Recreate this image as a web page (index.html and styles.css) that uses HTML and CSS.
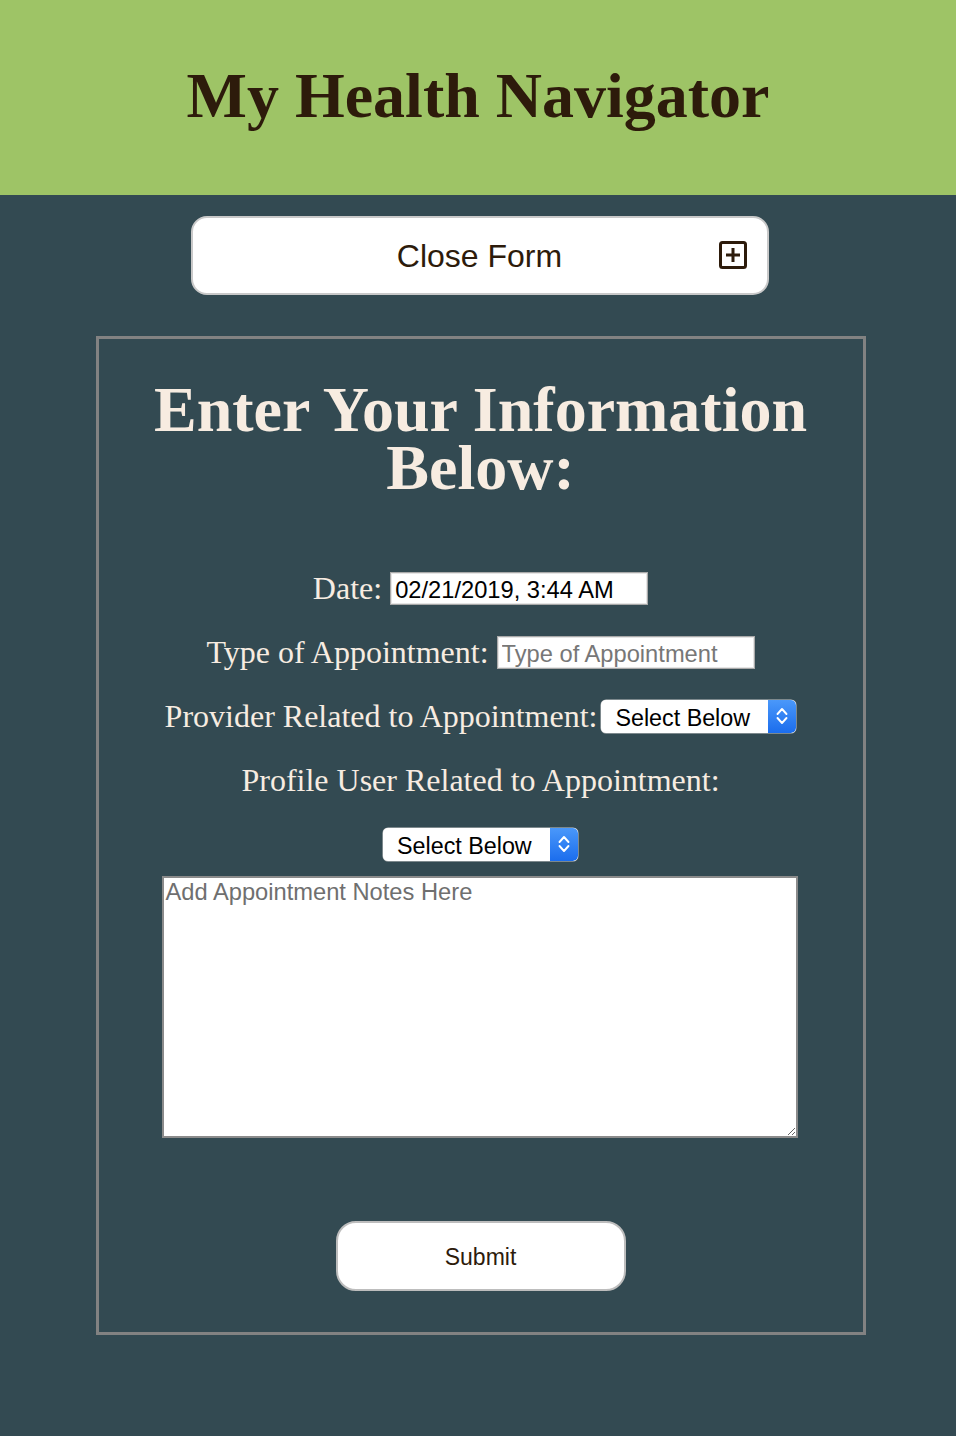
FILE: index.html
```html
<!DOCTYPE html>
<html lang="en">
<head>
<meta charset="utf-8">
<title>My Health Navigator</title>
<link rel="stylesheet" href="styles.css">
</head>
<body>
<header class="site-header">
  <h1 class="site-title">My Health Navigator</h1>
</header>
<main class="main">
  <button class="toggle-btn" type="button">Close Form
    <svg class="toggle-icon" viewBox="0 0 28 28" width="28" height="28" aria-hidden="true">
      <rect x="1.5" y="1.5" width="25" height="25" rx="2" fill="none" stroke="#2d1b0b" stroke-width="3"/>
      <path d="M14 7v14M7 14h14" stroke="#2d1b0b" stroke-width="3" fill="none"/>
    </svg>
  </button>
  <form class="form-box">
    <h2 class="form-title">Enter Your Information Below:</h2>
    <div class="row">
      <label class="label" for="date">Date:</label>
      <input class="field" id="date" type="text" value="02/21/2019, 3:44 AM">
    </div>
    <div class="row">
      <label class="label" for="type">Type of Appointment:</label>
      <input class="field" id="type" type="text" placeholder="Type of Appointment">
    </div>
    <div class="row row-tight">
      <label class="label" for="provider">Provider Related to Appointment:</label>
      <span class="select-wrap">
        <select class="select" id="provider"><option>Select Below</option></select>
        <span class="select-arrow"><svg viewBox="0 0 14 22" width="14" height="22"><path d="M2.5 9l4.5-5 4.5 5M2.5 13l4.5 5 4.5-5" fill="none" stroke="#fff" stroke-width="1.9" stroke-linecap="round" stroke-linejoin="round"/></svg></span>
      </span>
    </div>
    <div class="row">
      <label class="label" for="profile">Profile User Related to Appointment:</label>
    </div>
    <div class="row">
      <span class="select-wrap">
        <select class="select" id="profile"><option>Select Below</option></select>
        <span class="select-arrow"><svg viewBox="0 0 14 22" width="14" height="22"><path d="M2.5 9l4.5-5 4.5 5M2.5 13l4.5 5 4.5-5" fill="none" stroke="#fff" stroke-width="1.9" stroke-linecap="round" stroke-linejoin="round"/></svg></span>
      </span>
    </div>
    <textarea class="notes" placeholder="Add Appointment Notes Here"></textarea>
    <button class="submit-btn" type="button">Submit</button>
  </form>
</main>
</body>
</html>
```
FILE: styles.css
```css
html, body {
  margin: 0;
  padding: 0;
}
body {
  background: #334a52;
  font-family: "Liberation Serif", "Times New Roman", serif;
  min-height: 1436px;
}
.site-header {
  background: #9ec466;
  height: 195px;
  box-sizing: border-box;
  padding-top: 59px;
  text-align: center;
}
.site-title {
  margin: 0;
  font-size: 64px;
  line-height: 74px;
  font-weight: bold;
  color: #2d1b0b;
}
.main {
  display: flex;
  flex-direction: column;
  align-items: center;
  padding-top: 21px;
  padding-bottom: 101px;
}
.toggle-btn {
  position: relative;
  width: 578px;
  height: 79px;
  margin-left: 3px;
  background: #fff;
  border: 2px solid #c9c9c9;
  border-radius: 16px;
  font-family: "Liberation Sans", Arial, sans-serif;
  font-size: 32px;
  color: #2d1b0b;
  padding: 2px 0 0;
  cursor: pointer;
}
.toggle-icon {
  position: absolute;
  right: 20px;
  top: 23px;
}
.form-box {
  margin-top: 41px;
  margin-left: 5px;
  width: 770px;
  box-sizing: border-box;
  border: 3px solid #828282;
  padding: 42px 0 41px;
  display: flex;
  flex-direction: column;
  align-items: center;
}
.form-title {
  margin: 0 0 59px;
  font-size: 64px;
  line-height: 58px;
  font-weight: bold;
  color: #f7ece1;
  text-align: center;
  width: 680px;
}
.row {
  height: 64px;
  display: flex;
  align-items: center;
  justify-content: center;
  gap: 8px;
}
.row-tight {
  gap: 4px;
}
.label {
  font-size: 32px;
  color: #f7ece1;
}
.field {
  width: 258px;
  height: 33px;
  box-sizing: border-box;
  border: 1px solid #a9a9a9;
  box-shadow: inset 0 0 0 1px #e5e5e5;
  background: #fff;
  font-family: "Liberation Sans", Arial, sans-serif;
  font-size: 23.7px;
  color: #000;
  padding: 4px 4px 0;
  margin: 0;
}
.field::placeholder {
  color: #777;
}
.select-wrap {
  display: inline-flex;
  width: 195px;
  height: 33px;
  border-radius: 5px;
  background: #fff;
  overflow: hidden;
  box-shadow: 0 0 0 0.5px #c7c7c7;
}
.select {
  appearance: none;
  -webkit-appearance: none;
  flex: 1;
  min-width: 0;
  border: none;
  background: transparent;
  font-family: "Liberation Sans", Arial, sans-serif;
  font-size: 23.3px;
  color: #000;
  padding: 3px 0 0 14px;
  margin: 0;
  outline: none;
}
.select-arrow {
  width: 28px;
  display: flex;
  align-items: center;
  justify-content: center;
  background: linear-gradient(#4a98fa, #1b6ded);
  border-radius: 0 5px 5px 0;
}
.notes {
  display: block;
  width: 636px;
  height: 262px;
  box-sizing: border-box;
  border: 2px solid #8b8b8b;
  background: #fff;
  font-family: "Liberation Sans", Arial, sans-serif;
  font-size: 23.7px;
  padding: 1px 2px;
  margin: 0 2px 0 0;
  resize: both;
}
.notes::placeholder {
  color: #6f6f6f;
}
.submit-btn {
  margin-top: 83px;
  width: 290px;
  height: 70px;
  background: #fff;
  border: 2px solid #bdbdbd;
  border-radius: 20px;
  font-family: "Liberation Sans", Arial, sans-serif;
  font-size: 23px;
  color: #2d1b0b;
  padding: 2px 0 0;
  cursor: pointer;
}
```
